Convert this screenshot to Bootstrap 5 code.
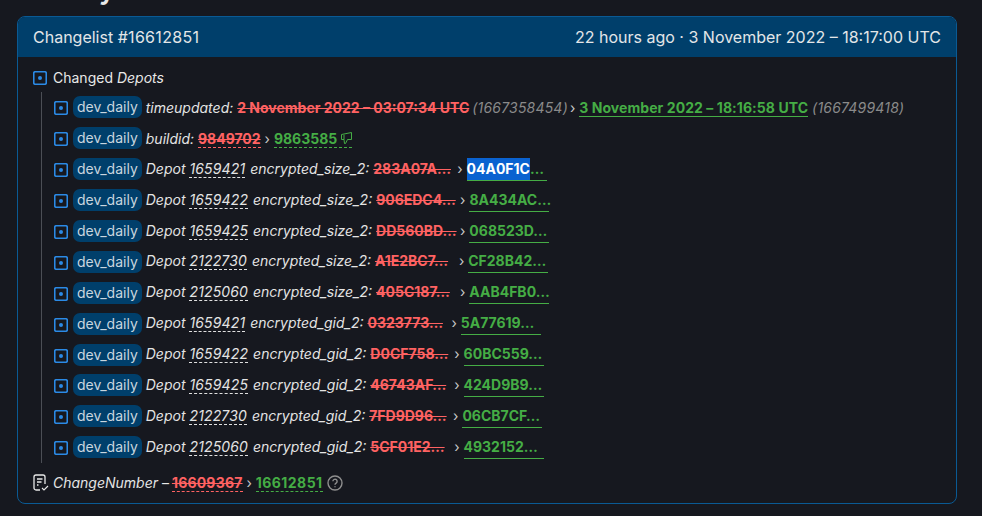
<!DOCTYPE html>
<html lang="en" data-bs-theme="dark">
<head>
<meta charset="utf-8">
<title>Changelist</title>
<link href="https://cdn.jsdelivr.net/npm/bootstrap@5.3.0/dist/css/bootstrap.min.css" rel="stylesheet">
<style>
html,body{height:516px;overflow:hidden}
body{background:#16181f;color:#e8e8e8;font-family:Inter,"Liberation Sans",sans-serif;font-size:14px;line-height:21px;padding:0 25px 0 17px}
.page-title{font-size:28px;line-height:34px;font-weight:600;margin:-28px 0 10px;color:#e8e8e8}
.cl-card{--bs-card-bg:#16181f;--bs-card-border-color:#0a5a94;--bs-card-border-radius:8px;--bs-card-inner-border-radius:7px;height:488px}
.cl-head{background:#003f6b;height:40px;padding:0 15px;font-size:16px;color:#e3e6e8;border-bottom:0}
.cl-num{letter-spacing:.3px}
.cl-body{padding:9px 15px 0}
.root-row{height:23px;gap:5px}
.tree{border-left:1px solid #4b4e55;margin:2px 0 0 8px;padding:0 0 0 12px;height:371px}
.tree-row{height:30.9px;white-space:nowrap}
.tree-row:first-child{margin-top:3px}
.box-ico{width:14px;height:14px;flex:none;margin-right:5px;margin-top:2px}
.root-row .box-ico{margin:0 1px 0 0}
.branch{background:#003f6b;color:#c9d6df;border-radius:7px;padding:0 4px;height:22px;line-height:22px;margin-right:4px}
.k{font-style:italic;color:#e4e4e4}
.dotted{border-bottom:1px dashed #e1e1e1;letter-spacing:.15px;margin-right:1px}
.old{color:#ff6262;font-weight:700;text-decoration:line-through}
.new{color:#45ad45;font-weight:700}
.old.dash{border-bottom:1px dashed #ff6262}
.new.dash{border-bottom:1px dashed #45ad45}
.new.solid{border-bottom:1px solid #45ad45;letter-spacing:.07px}
.ts{color:#8a8a8a;font-style:italic;letter-spacing:.2px}
.ts-first{margin:0 -2px 0 -1px}
.arrow{color:#c9c9c9}
.trunc-old{display:inline-block;width:80px;vertical-align:top}
.trunc-new{display:inline-block;width:80px;vertical-align:top;height:23px;border-bottom:1px solid #45ad45;color:#45ad45;font-weight:700}
.sel{background:#0a62d0;color:#fff;display:inline-block;height:22px}
.foot-row{height:24px;margin-top:7px;gap:4px}
.foot-ico{width:16px;height:17px;flex:none}
.foot-row .old{letter-spacing:.2px;margin-left:-1px}
.foot-row .new{letter-spacing:.45px}
</style>
</head>
<body>
<svg width="0" height="0" class="d-block position-absolute">
<symbol id="box" viewBox="0 0 14 14"><rect x=".75" y=".75" width="12.5" height="12.5" rx="1.5" fill="none" stroke="#2b8ae6" stroke-width="1.6"/><circle cx="7" cy="7" r="2" fill="#2b8ae6"/></symbol>
</svg>
<h2 class="page-title">History</h2>
<div class="card cl-card">
<div class="card-header cl-head d-flex justify-content-between align-items-center">
<span>Changelist <span class="cl-num">#16612851</span></span>
<span>22 hours ago · 3 November 2022 – 18:17:00 UTC</span>
</div>
<div class="card-body cl-body">
<div class="d-flex align-items-center root-row">
<svg class="box-ico" viewBox="0 0 14 14"><use href="#box"/></svg>
<span>Changed <i>Depots</i></span>
</div>
<ul class="list-unstyled tree">
<li class="tree-row d-flex align-items-center"><svg class="box-ico" viewBox="0 0 14 14"><use href="#box"/></svg><span class="branch">dev_daily</span><span><span class="k">timeupdated:</span> <span class="old date">2 November 2022 – 03:07:34 UTC</span> <span class="ts ts-first">(1667358454)</span> <span class="arrow">›</span> <span class="new solid">3 November 2022 – 18:16:58 UTC</span> <span class="ts">(1667499418)</span></span></li>
<li class="tree-row d-flex align-items-center"><svg class="box-ico" viewBox="0 0 14 14"><use href="#box"/></svg><span class="branch">dev_daily</span><span><span class="k">buildid:</span> <span class="old dash">9849702</span> <span class="arrow">›</span> <span class="new dash">9863585 <svg width="11" height="12" viewBox="0 0 11 12" fill="none" stroke="#45ad45" stroke-width="1" class="align-baseline"><path d="M10.5 .5v7H6.5L4.5 11.5H3.5L3 7.500H.5V2.500zM3 2.800V7.500"/></svg></span></span></li>
<li class="tree-row d-flex align-items-center"><svg class="box-ico" viewBox="0 0 14 14"><use href="#box"/></svg><span class="branch">dev_daily</span><span><span class="k">Depot <span class="dotted">1659421</span> encrypted_size_2:</span> <span class="old trunc-old">283A07A…</span> <span class="arrow">›</span> <span class="trunc-new"><span class="sel">04A0F1C</span>…</span></span></li>
<li class="tree-row d-flex align-items-center"><svg class="box-ico" viewBox="0 0 14 14"><use href="#box"/></svg><span class="branch">dev_daily</span><span><span class="k">Depot <span class="dotted">1659422</span> encrypted_size_2:</span> <span class="old trunc-old">906EDC4…</span> <span class="arrow">›</span> <span class="trunc-new">8A434AC…</span></span></li>
<li class="tree-row d-flex align-items-center"><svg class="box-ico" viewBox="0 0 14 14"><use href="#box"/></svg><span class="branch">dev_daily</span><span><span class="k">Depot <span class="dotted">1659425</span> encrypted_size_2:</span> <span class="old trunc-old">DD560BD…</span> <span class="arrow">›</span> <span class="trunc-new">068523D…</span></span></li>
<li class="tree-row d-flex align-items-center"><svg class="box-ico" viewBox="0 0 14 14"><use href="#box"/></svg><span class="branch">dev_daily</span><span><span class="k">Depot <span class="dotted">2122730</span> encrypted_size_2:</span> <span class="old trunc-old">A1E2BC7…</span> <span class="arrow">›</span> <span class="trunc-new">CF28B42…</span></span></li>
<li class="tree-row d-flex align-items-center"><svg class="box-ico" viewBox="0 0 14 14"><use href="#box"/></svg><span class="branch">dev_daily</span><span><span class="k">Depot <span class="dotted">2125060</span> encrypted_size_2:</span> <span class="old trunc-old">405C187…</span> <span class="arrow">›</span> <span class="trunc-new">AAB4FB0…</span></span></li>
<li class="tree-row d-flex align-items-center"><svg class="box-ico" viewBox="0 0 14 14"><use href="#box"/></svg><span class="branch">dev_daily</span><span><span class="k">Depot <span class="dotted">1659421</span> encrypted_gid_2:</span> <span class="old trunc-old">0323773…</span> <span class="arrow">›</span> <span class="trunc-new">5A77619…</span></span></li>
<li class="tree-row d-flex align-items-center"><svg class="box-ico" viewBox="0 0 14 14"><use href="#box"/></svg><span class="branch">dev_daily</span><span><span class="k">Depot <span class="dotted">1659422</span> encrypted_gid_2:</span> <span class="old trunc-old">D0CF758…</span> <span class="arrow">›</span> <span class="trunc-new">60BC559…</span></span></li>
<li class="tree-row d-flex align-items-center"><svg class="box-ico" viewBox="0 0 14 14"><use href="#box"/></svg><span class="branch">dev_daily</span><span><span class="k">Depot <span class="dotted">1659425</span> encrypted_gid_2:</span> <span class="old trunc-old">46743AF…</span> <span class="arrow">›</span> <span class="trunc-new">424D9B9…</span></span></li>
<li class="tree-row d-flex align-items-center"><svg class="box-ico" viewBox="0 0 14 14"><use href="#box"/></svg><span class="branch">dev_daily</span><span><span class="k">Depot <span class="dotted">2122730</span> encrypted_gid_2:</span> <span class="old trunc-old">7FD9D96…</span> <span class="arrow">›</span> <span class="trunc-new">06CB7CF…</span></span></li>
<li class="tree-row d-flex align-items-center"><svg class="box-ico" viewBox="0 0 14 14"><use href="#box"/></svg><span class="branch">dev_daily</span><span><span class="k">Depot <span class="dotted">2125060</span> encrypted_gid_2:</span> <span class="old trunc-old">5CF01E2…</span> <span class="arrow">›</span> <span class="trunc-new">4932152…</span></span></li>
</ul>
<div class="d-flex align-items-center foot-row">
<svg class="foot-ico" viewBox="0 0 16 17" fill="none" stroke="#e8e8e8" stroke-width="1.3"><path d="M7 16H3a2 2 0 0 1-2-2V3a2 2 0 0 1 2-2h7a2 2 0 0 1 2 2v7M4 5h5.500M4 8h4.500M4 11h1.500"/><path d="M9 14l2 2 4-4" stroke-width="1.100"/></svg>
<span><span class="k">ChangeNumber</span> – <span class="old dash">16609367</span> <span class="arrow">›</span> <span class="new dash">16612851</span> <svg width="16" height="16" viewBox="0 0 16 16" fill="none" stroke="#8f8f8f" stroke-width="1.400" class="align-text-bottom"><circle cx="8" cy="8" r="7"/><path d="M5.900 6.300a2.100 2.100 0 1 1 3.200 1.800c-.8.5-1.100.8-1.100 1.700M8 11.200v1.100"/></svg></span>
</div>
</div>
</div>
<script src="https://cdn.jsdelivr.net/npm/bootstrap@5.3.0/dist/js/bootstrap.bundle.min.js"></script>
</body>
</html>
